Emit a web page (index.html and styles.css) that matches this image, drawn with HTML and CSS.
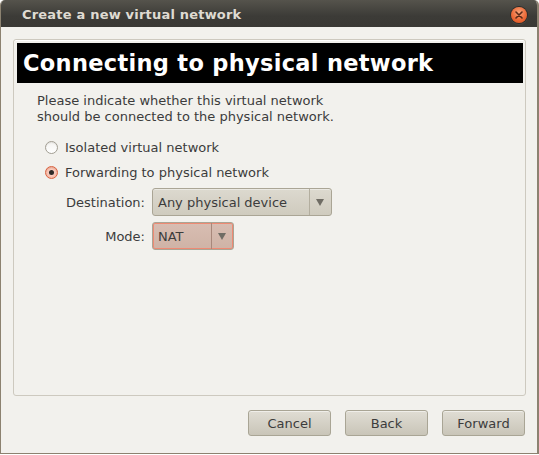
FILE: index.html
```html
<!DOCTYPE html>
<html>
<head>
<meta charset="utf-8">
<link rel="stylesheet" href="styles.css">
</head>
<body>
<div class="window">
  <div class="titlebar">
    <span class="title">Create a new virtual network</span>
    <span class="close"><svg width="8" height="8" viewBox="0 0 8 8"><path d="M1 1L7 7M7 1L1 7" stroke="#5a2a18" stroke-width="1.6" stroke-linecap="round"/></svg></span>
  </div>
  <div class="content">
    <div class="frame">
      <div class="header">Connecting to physical network</div>
      <div class="body">
        <p class="intro">Please indicate whether this virtual network<br>should be connected to the physical network.</p>
        <div class="radio-row"><span class="radio"></span><span>Isolated virtual network</span></div>
        <div class="radio-row"><span class="radio checked"></span><span>Forwarding to physical network</span></div>
        <div class="form">
          <span class="label">Destination:</span>
          <div class="combo wide"><span class="combo-text">Any physical device</span><span class="combo-arrow"></span></div>
          <span class="label">Mode:</span>
          <div class="combo narrow active"><span class="combo-text">NAT</span><span class="combo-arrow"></span></div>
        </div>
      </div>
    </div>
    <div class="buttons">
      <button class="btn">Cancel</button>
      <button class="btn">Back</button>
      <button class="btn">Forward</button>
    </div>
  </div>
</div>
</body>
</html>
```
FILE: styles.css
```css
html, body {
  margin: 0;
  padding: 0;
  background: #ffffff;
}
body {
  font-family: "DejaVu Sans", "Liberation Sans", sans-serif;
  font-size: 13px;
  color: #3c3c3c;
}
.window {
  width: 539px;
  height: 454px;
  box-sizing: border-box;
  background: #f2f1ed;
  border-left: 1px solid #8c8270;
  border-right: 2px solid #8c8270;
  border-bottom: 1px solid #8c8270;
  border-radius: 5px 5px 0 0;
  overflow: hidden;
  display: flex;
  flex-direction: column;
}
.titlebar {
  height: 27px;
  flex: none;
  background: linear-gradient(#55534c, #3c3b37 60%, #3a3935);
  display: flex;
  align-items: center;
  padding-left: 21px;
  padding-right: 10px;
  padding-top: 1px;
  box-sizing: border-box;
}
.title {
  color: #dfdbd2;
  font-weight: bold;
  font-size: 13px;
  letter-spacing: 0.2px;
}
.close {
  margin-left: auto;
  width: 16px;
  height: 16px;
  border-radius: 50%;
  background: radial-gradient(circle at 50% 35%, #f8a47a, #ec6a38 55%, #d44e1c);
  box-shadow: 0 0 0 1px #2c2b28, 0 1px 1px 1px rgba(255,255,255,0.08);
  display: flex;
  align-items: center;
  justify-content: center;
  margin-top: 1px;
}
.content {
  flex: 1;
  padding: 12px 11px 0 12px;
  display: flex;
  flex-direction: column;
}
.frame {
  height: 357px;
  box-sizing: border-box;
  border: 1px solid #cdc9bf;
  border-radius: 3px;
  padding: 3px 2px 3px 3px;
  box-shadow: 0 1px 0 #ffffff inset;
}
.header {
  background: #000000;
  color: #ffffff;
  font-weight: bold;
  font-size: 22.5px;
  height: 40px;
  line-height: 40px;
  padding-left: 6px;
  letter-spacing: 0.3px;
}
.body {
  padding: 10px 0 0 20px;
}
.intro {
  margin: 0;
  line-height: 16px;
}
.intro + .radio-row {
  margin-top: 10px;
}
.radio-row {
  display: flex;
  align-items: center;
  height: 25px;
  padding-left: 8px;
  gap: 7px;
}
.radio {
  width: 11px;
  height: 11px;
  border-radius: 50%;
  border: 1px solid #a29e93;
  background: linear-gradient(#f4f3f0, #ffffff);
  box-shadow: inset 0 1px 1px rgba(0,0,0,0.08);
  position: relative;
  flex: none;
}
.radio.checked {
  border-color: #d9623f;
  background: radial-gradient(circle, #fde3da, #f3a58e);
}
.radio.checked::after {
  content: "";
  position: absolute;
  left: 3px;
  top: 3px;
  width: 5px;
  height: 5px;
  border-radius: 50%;
  background: #2e2a27;
}
.form {
  display: grid;
  grid-template-columns: auto auto;
  justify-content: start;
  column-gap: 7px;
  row-gap: 6px;
  margin-top: 3px;
  padding-left: 29px;
  align-items: center;
}
.label {
  text-align: right;
}
.combo {
  height: 28px;
  box-sizing: border-box;
  border: 1px solid #aaa595;
  border-radius: 3px;
  background: linear-gradient(#dcd9cf, #cfcbbe);
  display: flex;
  align-items: stretch;
  box-shadow: inset 0 1px 0 rgba(255,255,255,0.4);
}
.combo.wide { width: 180px; }
.combo.narrow { width: 82px; }
.combo-text {
  flex: 1;
  display: flex;
  align-items: center;
  padding-left: 5px;
  border-right: 1px solid #b3ae9f;
}
.combo-arrow {
  width: 21px;
  flex: none;
  display: flex;
  align-items: center;
  justify-content: center;
}
.combo-arrow::after {
  content: "";
  border-left: 4px solid transparent;
  border-right: 4px solid transparent;
  border-top: 7px solid #6f6c64;
  margin-top: 1px;
}
.combo.active {
  background: linear-gradient(#d8bdb2, #cfb3a6);
  box-shadow: inset 0 0 0 1px #ee8a74;
}
.combo.active .combo-text {
  border-right-color: #a8887b;
}
.buttons {
  display: flex;
  justify-content: flex-end;
  gap: 14px;
  margin-top: 14px;
  padding-right: 1px;
}
.btn {
  width: 83px;
  height: 26px;
  font-family: "DejaVu Sans", "Liberation Sans", sans-serif;
  font-size: 13px;
  color: #3c3c3c;
  border: 1px solid #a9a595;
  border-radius: 3px;
  background: linear-gradient(#e0ddd4, #c9c5b8);
  box-shadow: inset 0 1px 0 rgba(255,255,255,0.5);
  padding: 0;
}
```
